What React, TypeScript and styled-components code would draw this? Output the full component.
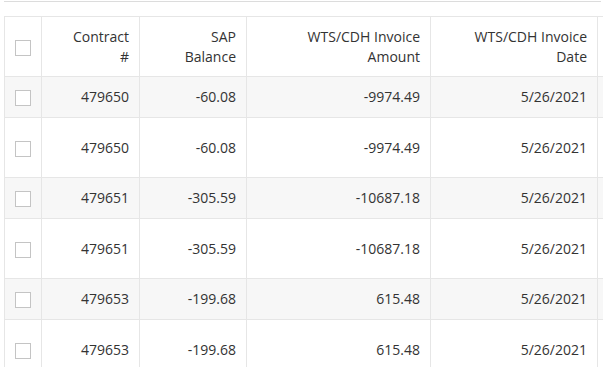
import React from "react";
import styled, { createGlobalStyle } from "styled-components";

const Global = createGlobalStyle`
  html, body { margin: 0; padding: 0; background: #fff; overflow: hidden; }
  body { font-family: "Open Sans", "Noto Sans", sans-serif; font-size: 14px; color: #333; }
`;

const Page = styled.div`
  width: 603px;
  height: 367px;
  overflow: hidden;
  padding: 1px 0 0 4px;
  box-sizing: border-box;
`;

const TopRule = styled.div`
  border-top: 1px solid #dcdcdc;
  margin-right: 2px;
`;

const GridWrap = styled.div`
  margin-top: 14px;
  width: 760px;
`;

const Table = styled.table`
  border-collapse: collapse;
  table-layout: fixed;
  width: 760px;
  line-height: 20px;
`;

const HeadCell = styled.th<{ $w: number }>`
  width: ${(p) => p.$w}px;
  box-sizing: border-box;
  border: 1px solid #e6e6e6;
  padding: 9px 10px 9px 10px;
  height: 60px;
  text-align: right;
  vertical-align: middle;
  font-weight: 400;
  color: #333;
`;

const CheckHead = styled(HeadCell)`
  text-align: center;
  padding: 0;
`;

const Row = styled.tr<{ $striped: boolean; $tall: boolean }>`
  background: ${(p) => (p.$striped ? "#f7f7f7" : "#fff")};
  height: ${(p) => (p.$tall ? 60 : 41)}px;
`;

const Cell = styled.td`
  border: 1px solid #e6e6e6;
  padding: 0 10px;
  text-align: right;
  vertical-align: middle;
  color: #333;
  white-space: nowrap;
`;

const CheckCell = styled(Cell)`
  text-align: center;
  padding: 0;
`;

const Box = styled.span`
  display: inline-block;
  width: 16px;
  height: 16px;
  box-sizing: border-box;
  border: 1px solid #c4c4c4;
  background: #fff;
  vertical-align: middle;
`;

const cols = [37, 98, 107, 184, 167, 167];

const rows = [
  ["479650", "-60.08", "-9974.49", "5/26/2021"],
  ["479650", "-60.08", "-9974.49", "5/26/2021"],
  ["479651", "-305.59", "-10687.18", "5/26/2021"],
  ["479651", "-305.59", "-10687.18", "5/26/2021"],
  ["479653", "-199.68", "615.48", "5/26/2021"],
  ["479653", "-199.68", "615.48", "5/26/2021"],
];

export default function App() {
  return (
    <Page>
      <Global />
      <TopRule />
      <GridWrap>
        <Table>
          <thead>
            <tr>
              <CheckHead $w={cols[0]}>
                <Box />
              </CheckHead>
              <HeadCell $w={cols[1]}>
                Contract
                <br />#
              </HeadCell>
              <HeadCell $w={cols[2]}>
                SAP
                <br />
                Balance
              </HeadCell>
              <HeadCell $w={cols[3]}>WTS/CDH Invoice Amount</HeadCell>
              <HeadCell $w={cols[4]}>WTS/CDH Invoice Date</HeadCell>
              <HeadCell $w={cols[5]}></HeadCell>
            </tr>
          </thead>
          <tbody>
            {rows.map((r, i) => (
              <Row key={i} $striped={i % 2 === 0} $tall={i % 2 === 1}>
                <CheckCell>
                  <Box />
                </CheckCell>
                {r.map((v, j) => (
                  <Cell key={j}>{v}</Cell>
                ))}
                <Cell />
              </Row>
            ))}
          </tbody>
        </Table>
      </GridWrap>
    </Page>
  );
}
